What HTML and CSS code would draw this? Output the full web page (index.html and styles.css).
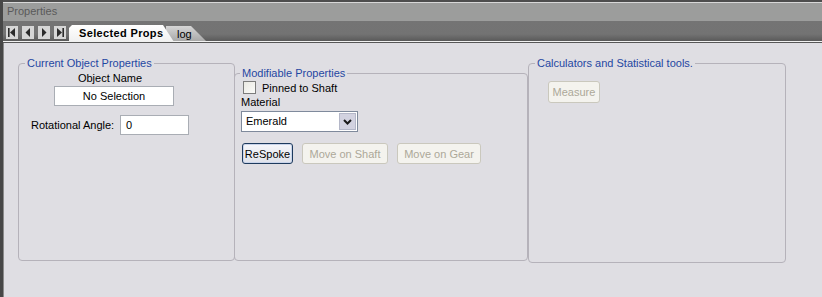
FILE: index.html
```html
<!DOCTYPE html>
<html lang="en">
<head>
  <meta charset="UTF-8" />
  <title>Properties</title>
  <link rel="stylesheet" href="styles.css">
</head>
<body>
  <div class="titlebar">Properties</div>
  <div class="tabstrip">
    <div class="nav">
      <span class="navbtn"><svg width="8" height="9" viewBox="0 0 8 9"><rect x="0" y="0" width="1.6" height="9" fill="#2b2b2b"/><path d="M7 0 L2 4.5 L7 9 Z" fill="#2b2b2b"/></svg></span>
      <span class="navbtn"><svg width="8" height="9" viewBox="0 0 8 9"><path d="M6 0 L1.5 4.5 L6 9 Z" fill="#2b2b2b"/></svg></span>
      <span class="navbtn"><svg width="8" height="9" viewBox="0 0 8 9"><path d="M2 0 L6.5 4.5 L2 9 Z" fill="#2b2b2b"/></svg></span>
      <span class="navbtn"><svg width="8" height="9" viewBox="0 0 8 9"><path d="M1 0 L6 4.5 L1 9 Z" fill="#2b2b2b"/><rect x="6.4" y="0" width="1.6" height="9" fill="#2b2b2b"/></svg></span>
    </div>
    <div class="tab active">Selected Props</div>
    <div class="tab">log</div>
  </div>

  <div class="content">
    <fieldset class="group current">
      <legend>Current Object Properties</legend>
      <div class="name-block">
        <div class="caption">Object Name</div>
        <div class="textbox centered">No Selection</div>
      </div>
      <div class="angle-row">
        <span>Rotational Angle:</span>
        <div class="textbox angle">0</div>
      </div>
    </fieldset>

    <fieldset class="group modifiable">
      <legend>Modifiable Properties</legend>
      <div class="check-row">
        <span class="checkbox"></span>
        <span>Pinned to Shaft</span>
      </div>
      <div class="material-label">Material</div>
      <div class="select">
        <span class="select-value">Emerald</span>
        <span class="select-btn"><svg width="9" height="6" viewBox="0 0 9 6"><path d="M1 1 L4.5 4.5 L8 1" stroke="#1a1a1a" stroke-width="2" fill="none"/></svg></span>
      </div>
      <div class="buttons">
        <button class="btn primary respoke">ReSpoke</button>
        <button class="btn shaft" disabled>Move on Shaft</button>
        <button class="btn gear" disabled>Move on Gear</button>
      </div>
    </fieldset>

    <fieldset class="group tools">
      <legend>Calculators and Statistical tools.</legend>
      <button class="btn measure" disabled>Measure</button>
    </fieldset>
  </div>
</body>
</html>
```

FILE: styles.css
```css
body {
  margin: 0;
  height: 297px;
  overflow: hidden;
  display: flex;
  flex-direction: column;
  background: #dfdee3;
  border-left: 3px solid #474747;
  font-family: "Liberation Sans", Arial, sans-serif;
  font-size: 11px;
  color: #000;
}
.titlebar {
  height: 19px;
  flex: none;
  line-height: 19px;
  padding-left: 4px;
  background: #9c9d9c;
  border-top: 2px solid #4e4e4e;
  box-shadow: inset 0 1px 0 #d8d8d8;
  color: #5a5a5a;
}
.tabstrip {
  height: 20px;
  flex: none;
  display: flex;
  align-items: flex-end;
  padding-left: 3px;
  background: linear-gradient(#747474 0, #737373 65%, #5a5a5a 100%);
  border-bottom: 1px solid #f2f2f2;
}
.nav {
  display: flex;
  gap: 4px;
  align-self: flex-start;
  margin-top: 5px;
  margin-right: 3px;
}
.navbtn {
  width: 12px;
  height: 13px;
  background: #d6d6d6;
  display: flex;
  align-items: center;
  justify-content: center;
}
.tab {
  position: relative;
}
.tab.active {
  z-index: 2;
  width: 105px;
  height: 17px;
  line-height: 17px;
  margin-bottom: -1px;
  padding-left: 10px;
  box-sizing: border-box;
  font-weight: bold;
  letter-spacing: 0.35px;
  background: linear-gradient(#ffffff, #f0f0f0);
  clip-path: polygon(0 3px, 3px 0, 94px 0, 105px 17px, 0 17px);
}
.tab:not(.active) {
  z-index: 1;
  width: 40px;
  height: 15px;
  line-height: 16px;
  margin-left: -8px;
  padding-left: 11px;
  box-sizing: border-box;
  background: linear-gradient(#d6d6d6, #a9a9a9);
  clip-path: polygon(0 0, 25px 0, 40px 15px, 0 15px);
}
.content {
  flex: 1;
  display: flex;
  align-items: flex-start;
  border-top: 1px solid #575757;
  box-shadow: inset 1px 0 0 #8a8a8a;
  padding: 14px 0 0 15px;
}
.group {
  margin: 0;
  padding: 0;
  border: 1px solid #b5b2ba;
  border-radius: 4px;
  box-sizing: border-box;
  min-width: 0;
}
.group legend {
  color: #1f47a2;
  padding: 0 2px;
  line-height: 13px;
}
.current {
  width: 217px;
  height: 204px;
}
.current legend {
  margin-left: 6px;
}
.modifiable {
  width: 294px;
  height: 194px;
  margin-left: -1px;
  margin-top: 10px;
  padding-left: 6px;
}
.modifiable legend {
  margin-left: -1px;
}
.tools {
  width: 258px;
  height: 206px;
  padding-left: 19px;
}
.tools legend {
  margin-left: -13px;
}
.name-block {
  width: 120px;
  margin: 2px 0 0 35px;
}
.caption {
  text-align: center;
  line-height: 13px;
  padding-right: 8px;
}
.textbox {
  height: 20px;
  line-height: 19px;
  box-sizing: border-box;
  background: #fff;
  border: 1px solid #a9adb4;
  margin-top: 1px;
}
.textbox.centered {
  text-align: center;
}
.angle-row {
  display: flex;
  align-items: center;
  margin: 9px 0 0 12px;
}
.angle-row span {
  width: 89px;
}
.textbox.angle {
  width: 69px;
  padding-left: 5px;
  margin-top: 0;
}
.check-row {
  display: flex;
  align-items: center;
  gap: 6px;
  margin: 1px 0 0 2px;
}
.checkbox {
  width: 13px;
  height: 13px;
  box-sizing: border-box;
  border: 1px solid #7c7c7c;
  background: linear-gradient(135deg, #e9e8e2, #fbfbf9);
}
.material-label {
  line-height: 13px;
  margin-top: 2px;
}
.select {
  display: flex;
  width: 117px;
  height: 21px;
  box-sizing: border-box;
  margin-top: 2px;
  background: #fff;
  border: 1px solid #7f8a9c;
}
.select-value {
  flex: 1;
  padding-left: 4px;
  line-height: 19px;
}
.select-btn {
  width: 15px;
  margin: 1px;
  background: #d2d2e0;
  border: 1px solid #b4b7c8;
  display: flex;
  align-items: center;
  justify-content: center;
}
.buttons {
  display: flex;
  gap: 9px;
  margin: 11px 0 0 1px;
}
.btn {
  height: 21px;
  padding: 0;
  font-family: inherit;
  font-size: 11px;
  border-radius: 3px;
  background: #f4f3ee;
  border: 1px solid #cac8bd;
  color: #aca899;
}
.btn.primary {
  color: #000;
  border: 1px solid #1e3b5e;
  background: linear-gradient(#f6f7fb, #dfe2ea);
  box-shadow: inset 0 0 0 1px #c9d4ea;
}
.respoke {
  width: 51px;
}
.shaft {
  width: 86px;
}
.gear {
  width: 84px;
}
.measure {
  width: 52px;
  height: 22px;
  margin-top: 11px;
}
```
